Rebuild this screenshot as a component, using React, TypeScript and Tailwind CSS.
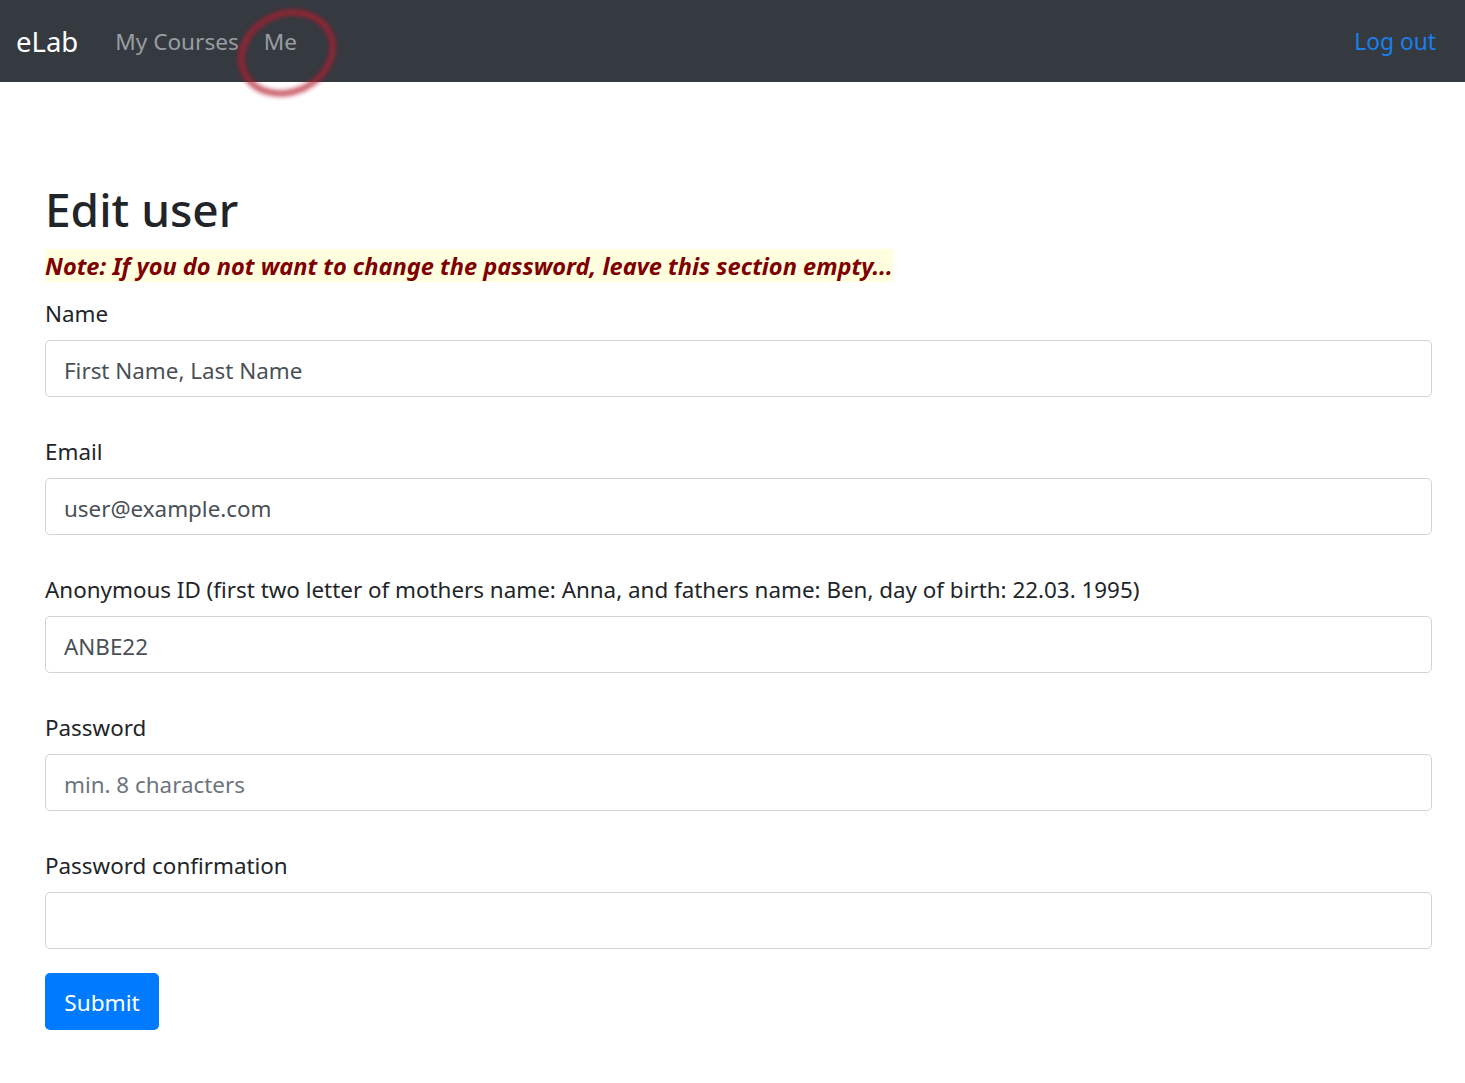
import React from "react";

const font = { fontFamily: '"Noto Sans", "Open Sans", sans-serif' };

function Field({
  label,
  value,
  placeholder,
  type = "text",
}: {
  label: string;
  value?: string;
  placeholder?: string;
  type?: string;
}) {
  return (
    <div className="mb-[40px]">
      <label className="block text-[22.4px] leading-[30px] text-[#212529] mb-[11px]">{label}</label>
      <input
        type={type}
        defaultValue={value}
        placeholder={placeholder}
        className="block w-full h-[57px] border border-[#ced4da] rounded-[5px] px-[18px] pt-[3px] text-[22.4px] text-[#495057] placeholder:text-[#6c757d] bg-white outline-none"
      />
    </div>
  );
}

export default function App() {
  return (
    <div className="min-h-screen bg-white relative" style={font}>
      <nav className="h-[82px] bg-[#343a40] flex items-center pl-[16px] pr-[29px] pt-[2px]">
        <span className="text-[27.5px] text-white mr-[37px]">eLab</span>
        <span className="text-[22.6px] text-[#9a9da0] mr-[25px]">My Courses</span>
        <span className="text-[22.6px] text-[#9a9da0]">Me</span>
        <span className="ml-auto text-[22.8px] text-[#1a7fec]">Log out</span>
      </nav>
      <svg
        className="absolute left-[225px] top-[3px] pointer-events-none"
        width="125"
        height="100"
        viewBox="0 0 125 100"
      >
        <defs>
          <filter id="blur" x="-20%" y="-20%" width="140%" height="140%">
            <feGaussianBlur stdDeviation="2" />
          </filter>
        </defs>
        <ellipse
          cx="62"
          cy="50"
          rx="47"
          ry="39"
          transform="rotate(-25 62 50)"
          fill="none"
          stroke="#b3202c"
          strokeOpacity="0.7"
          strokeWidth="6.5"
          filter="url(#blur)"
        />
      </svg>
      <main className="pl-[45px] pr-[33px] pt-[97px]">
        <h1 className="text-[46px] leading-[60px] font-medium text-[#212529] mb-[10px]">Edit user</h1>
        <div className="mb-[17px] h-[33px]">
          <span className="inline-block bg-[#ffffe0] text-[#800000] font-bold italic text-[23.6px] leading-[32px] pt-[1px] align-top">
            Note: If you do not want to change the password, leave this section empty...
          </span>
        </div>
        <Field label="Name" value="First Name, Last Name" />
        <Field label="Email" value="user@example.com" type="email" />
        <Field
          label="Anonymous ID (first two letter of mothers name: Anna, and fathers name: Ben, day of birth: 22.03. 1995)"
          value="ANBE22"
        />
        <Field label="Password" placeholder="min. 8 characters" type="password" />
        <div className="mb-[24px]">
          <label className="block text-[22.4px] leading-[30px] text-[#212529] mb-[11px]">Password confirmation</label>
          <input
            type="password"
            className="block w-full h-[57px] border border-[#ced4da] rounded-[5px] px-[18px] text-[22.4px] text-[#495057] bg-white outline-none"
          />
        </div>
        <button className="h-[57px] w-[114px] bg-[#007bff] text-white text-[22.6px] rounded-[5px] pt-[2px]">Submit</button>
      </main>
    </div>
  );
}
